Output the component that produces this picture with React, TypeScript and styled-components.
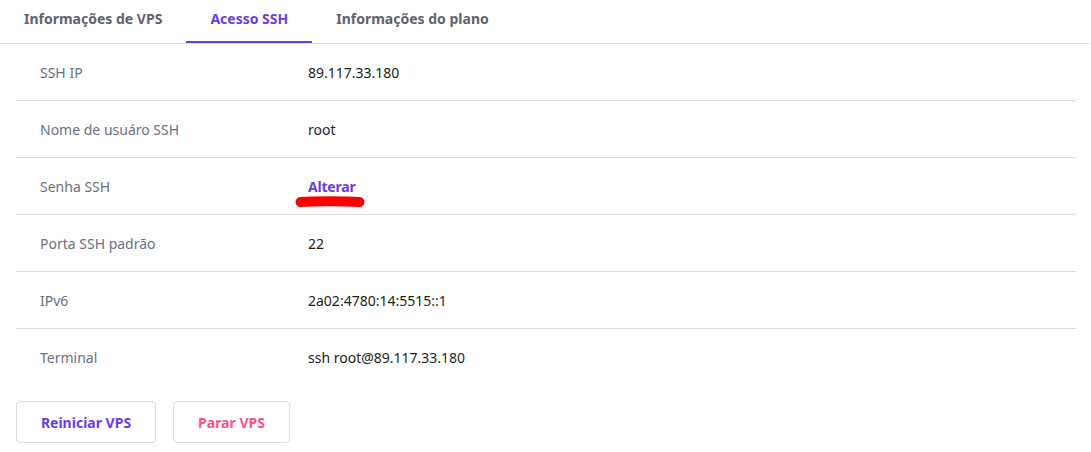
import React from "react";
import styled, { createGlobalStyle } from "styled-components";

const GlobalStyle = createGlobalStyle`
  body {
    margin: 0;
    background: #fff;
    font-family: "Noto Sans", "Open Sans", sans-serif;
  }
`;

interface Row {
  label: string;
  value: string;
  link?: boolean;
}

const rows: Row[] = [
  { label: "SSH IP", value: "89.117.33.180" },
  { label: "Nome de usuáro SSH", value: "root" },
  { label: "Senha SSH", value: "Alterar", link: true },
  { label: "Porta SSH padrão", value: "22" },
  { label: "IPv6", value: "2a02:4780:14:5515::1" },
  { label: "Terminal", value: "ssh root@89.117.33.180" },
];

const tabs = ["Informações de VPS", "Acesso SSH", "Informações do plano"];

const App = (): JSX.Element => {
  return (
    <Wrapper>
      <GlobalStyle />
      <Tabs>
        {tabs.map((t, i) => (
          <Tab key={t} active={i === 1}>
            {t}
          </Tab>
        ))}
      </Tabs>
      <Table>
        {rows.map((r, i) => (
          <TableRow key={r.label} last={i === rows.length - 1}>
            <Label>{r.label}</Label>
            {r.link ? (
              <LinkCell>
                <LinkText>{r.value}</LinkText>
                <Scribble viewBox="0 0 70 12" width="70" height="12">
                  <path
                    d="M5.5 6 C 20 5, 50 5, 64.5 6"
                    stroke="#ff0000"
                    strokeWidth="10"
                    strokeLinecap="round"
                    fill="none"
                  />
                </Scribble>
              </LinkCell>
            ) : (
              <Value>{r.value}</Value>
            )}
          </TableRow>
        ))}
      </Table>
      <Actions>
        <ActionButton tone="#673de6" w={140}>Reiniciar VPS</ActionButton>
        <ActionButton tone="#fc5185" w={117}>Parar VPS</ActionButton>
      </Actions>
    </Wrapper>
  );
};

export default App;

const Wrapper = styled.div`
  width: 1091px;
  height: 452px;
  background: #fff;
`;

const Tabs = styled.div`
  display: flex;
  height: 43px;
  width: 1090px;
  border-bottom: 1px solid #dadce0;
`;

const Tab = styled.div<{ active?: boolean }>`
  box-sizing: border-box;
  display: flex;
  align-items: center;
  justify-content: center;
  padding: 0 24px 5px;
  height: 43px;
  font-size: 14px;
  font-weight: 700;
  color: ${(p) => (p.active ? "#673de6" : "#5f6270")};
  border-bottom: 2px solid ${(p) => (p.active ? "#673de6" : "transparent")};
  margin-bottom: -1px;
`;

const Table = styled.div`
  padding: 0 15px 0 16px;
  width: 1060px;
`;

const TableRow = styled.div<{ last?: boolean }>`
  display: grid;
  grid-template-columns: 268px 1fr;
  align-items: center;
  height: 56px;
  padding-left: 24px;
  border-bottom: 1px solid ${(p) => (p.last ? "transparent" : "#dadce0")};
`;

const Label = styled.div`
  font-size: 14px;
  color: #6d7081;
`;

const Value = styled.div`
  font-size: 14px;
  color: #1d1e20;
`;

const LinkCell = styled.div`
  position: relative;
`;

const LinkText = styled.span`
  font-size: 14px;
  font-weight: 700;
  color: #673de6;
  letter-spacing: -0.2px;
`;

const Scribble = styled.svg`
  position: absolute;
  left: -13px;
  top: 21px;
`;

const Actions = styled.div`
  display: flex;
  gap: 17px;
  padding: 15px 16px 0;
`;

const ActionButton = styled.button<{ tone: string; w: number }>`
  width: ${(p) => p.w}px;
  height: 42px;
  background: #fff;
  border: 1px solid #dadce0;
  border-radius: 4px;
  font-family: "Noto Sans", sans-serif;
  font-size: 14px;
  font-weight: 700;
  color: ${(p) => p.tone};
`;
